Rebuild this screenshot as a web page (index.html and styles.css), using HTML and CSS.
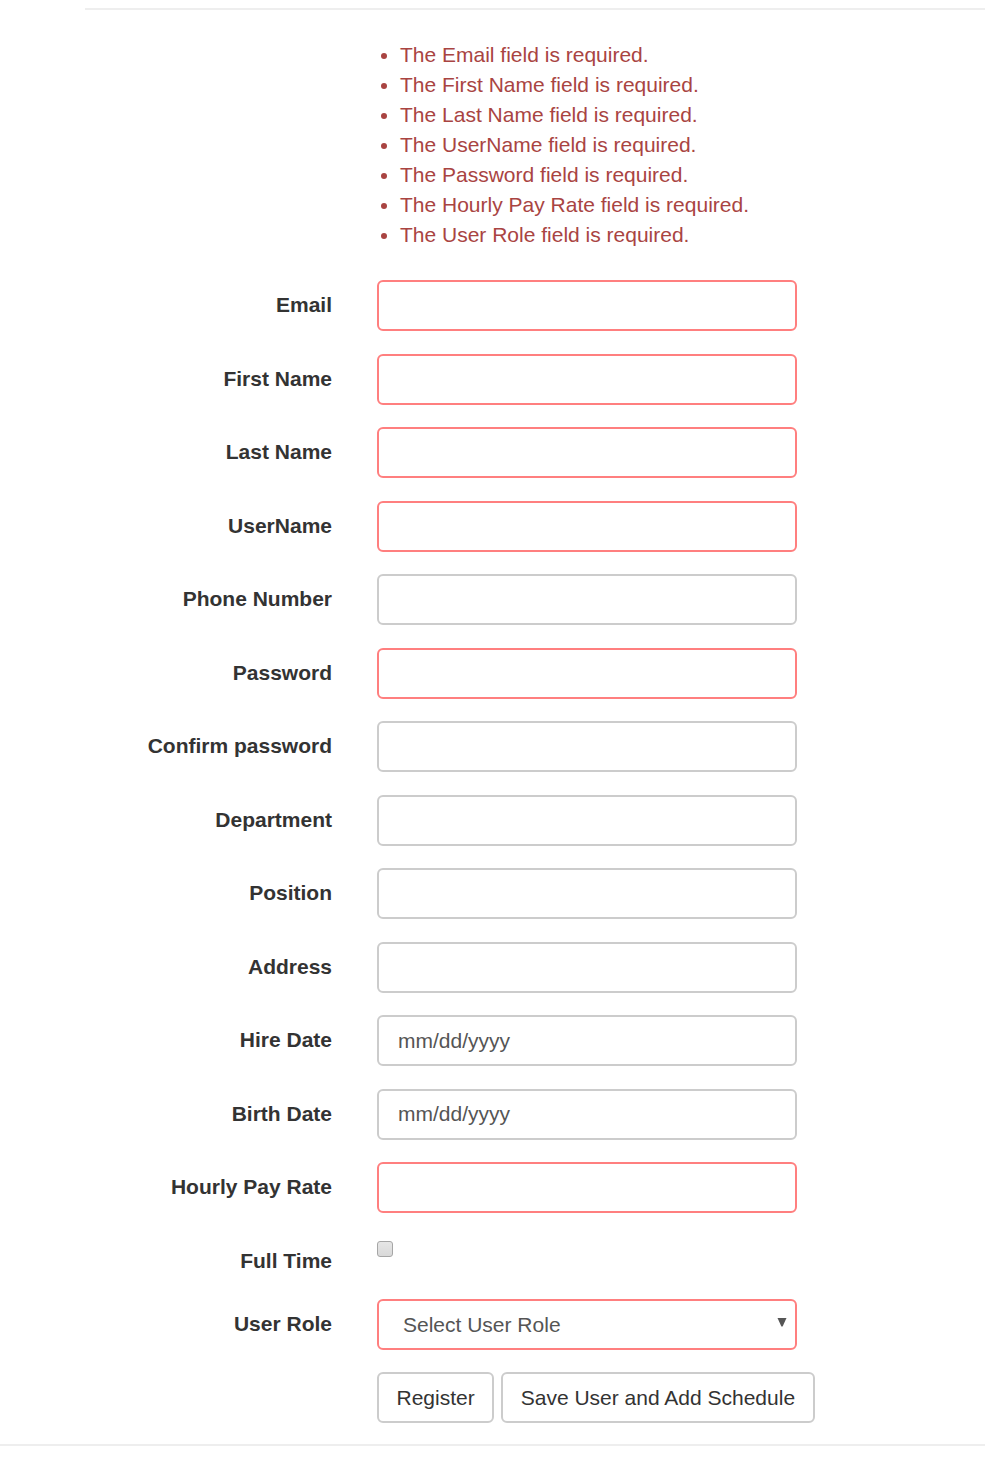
FILE: index.html
```html
<!DOCTYPE html>
<html lang="en">
<head>
<meta charset="utf-8">
<title>Register</title>
<link rel="stylesheet" href="styles.css">
</head>
<body>
<hr class="rule-top">
<ul class="errors">
  <li>The Email field is required.</li>
  <li>The First Name field is required.</li>
  <li>The Last Name field is required.</li>
  <li>The UserName field is required.</li>
  <li>The Password field is required.</li>
  <li>The Hourly Pay Rate field is required.</li>
  <li>The User Role field is required.</li>
</ul>
<form class="form">
  <div class="form-group">
    <label class="label">Email</label>
    <input class="control invalid" type="text">
  </div>
  <div class="form-group">
    <label class="label">First Name</label>
    <input class="control invalid" type="text">
  </div>
  <div class="form-group">
    <label class="label">Last Name</label>
    <input class="control invalid" type="text">
  </div>
  <div class="form-group">
    <label class="label">UserName</label>
    <input class="control invalid" type="text">
  </div>
  <div class="form-group">
    <label class="label">Phone Number</label>
    <input class="control" type="text">
  </div>
  <div class="form-group">
    <label class="label">Password</label>
    <input class="control invalid" type="password">
  </div>
  <div class="form-group">
    <label class="label">Confirm password</label>
    <input class="control" type="password">
  </div>
  <div class="form-group">
    <label class="label">Department</label>
    <input class="control" type="text">
  </div>
  <div class="form-group">
    <label class="label">Position</label>
    <input class="control" type="text">
  </div>
  <div class="form-group">
    <label class="label">Address</label>
    <input class="control" type="text">
  </div>
  <div class="form-group">
    <label class="label">Hire Date</label>
    <input class="control date" type="text" placeholder="mm/dd/yyyy">
  </div>
  <div class="form-group">
    <label class="label">Birth Date</label>
    <input class="control date" type="text" placeholder="mm/dd/yyyy">
  </div>
  <div class="form-group">
    <label class="label">Hourly Pay Rate</label>
    <input class="control invalid" type="text">
  </div>
  <div class="form-group">
    <label class="label">Full Time</label>
    <div class="check-wrap"><input class="check" type="checkbox"></div>
  </div>
  <div class="form-group">
    <label class="label">User Role</label>
    <div class="select-wrap">
      <select class="control invalid select">
        <option>Select User Role</option>
      </select>
      <svg class="arrow" width="10" height="10" viewBox="0 0 10 10"><path d="M0.5 1 L9.5 1 L5.6 9.5 L4.4 9.5 Z" fill="#555"/></svg>
    </div>
  </div>
  <div class="form-group">
    <div class="spacer"></div>
    <div class="buttons">
      <button type="button" class="btn">Register</button>
      <button type="button" class="btn">Save User and Add Schedule</button>
    </div>
  </div>
</form>
<hr class="rule-bottom">
</body>
</html>
```
FILE: styles.css
```css
html, body {
  margin: 0;
  padding: 0;
  background: #fff;
}
body {
  font-family: "Liberation Sans", Arial, sans-serif;
  font-size: 21px;
  line-height: 30px;
  color: #333;
}
.rule-top {
  margin: 8px 0 0 85px;
  border: 0;
  border-top: 2px solid #eee;
  height: 0;
}
.errors {
  margin: 30px 0 30px 0;
  padding-left: 400px;
  color: #a94442;
}
.form {
  margin: 0;
}
.form-group {
  display: grid;
  grid-template-columns: 332px auto;
  column-gap: 45px;
  margin-bottom: 22.5px;
  align-items: start;
}
.form-group:last-child {
  margin-bottom: 0;
}
.label {
  display: block;
  text-align: right;
  font-weight: bold;
  padding-top: 10px;
  line-height: 30px;
}
.control {
  box-sizing: border-box;
  display: block;
  width: 420px;
  height: 51px;
  margin: 0;
  padding: 0 18px;
  font-family: "Liberation Sans", Arial, sans-serif;
  font-size: 21px;
  color: #555;
  background: #fff;
  border: 2px solid #ccc;
  border-radius: 6px;
  outline: none;
}
.control.invalid {
  border-color: #ff7f7f;
}
.date {
  padding-left: 19px;
}
.date::placeholder {
  color: #555;
  opacity: 1;
}
.check-wrap {
  padding-top: 5px;
  height: 35.5px;
}
.check {
  -webkit-appearance: none;
  appearance: none;
  display: block;
  box-sizing: border-box;
  width: 16px;
  height: 16px;
  margin: 0;
  border: 1px solid #a6a6a6;
  border-radius: 3px;
  background: linear-gradient(#e6e6e6, #d9d9d9);
}
.select-wrap {
  position: relative;
  width: 420px;
}
.select {
  -webkit-appearance: none;
  appearance: none;
  padding-left: 24px;
}
.arrow {
  position: absolute;
  left: 400px;
  top: 18px;
}
.spacer {
  height: 1px;
}
.buttons {
  display: flex;
  gap: 7px;
}
.btn {
  box-sizing: border-box;
  height: 51px;
  padding: 0 17.5px;
  font-family: "Liberation Sans", Arial, sans-serif;
  font-size: 21px;
  color: #333;
  background: #fff;
  border: 2px solid #ccc;
  border-radius: 6px;
  white-space: nowrap;
}
.rule-bottom {
  margin: 21px 0 0 0;
  border: 0;
  border-top: 2px solid #eee;
  height: 0;
}
```
